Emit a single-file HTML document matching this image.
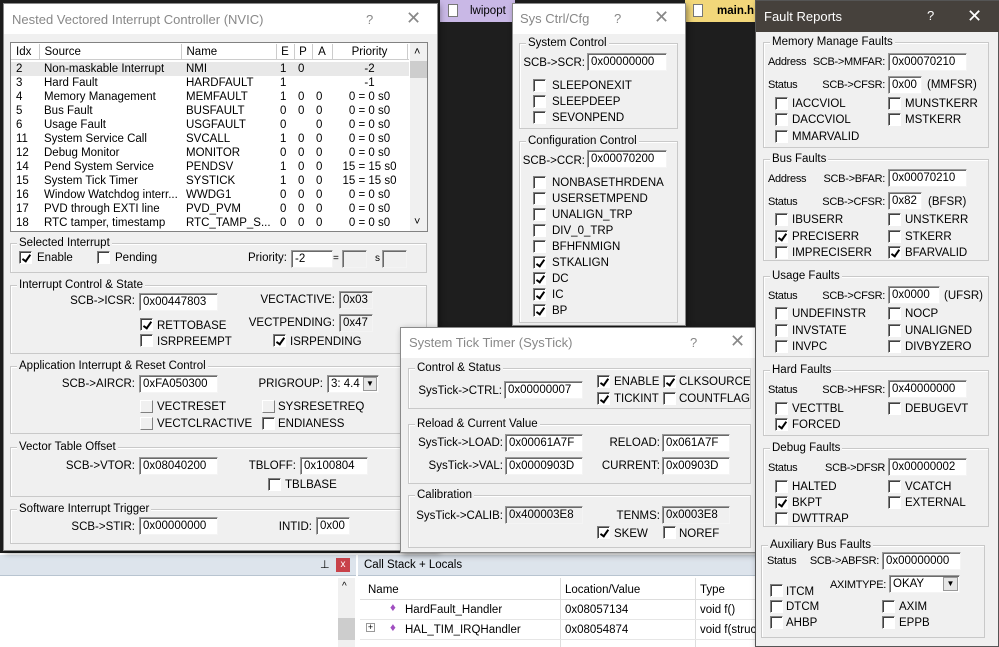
<!DOCTYPE html>
<html><head><meta charset="utf-8"><style>
*{margin:0;padding:0;box-sizing:border-box}
body{width:999px;height:647px;position:relative;overflow:hidden;background:#1e1e1e;font:11px "Liberation Sans",sans-serif}
div,span{position:absolute}
.w{background:#f0f0f0;border:1px solid #8a8a8a;box-shadow:2px 2px 6px rgba(0,0,0,.4)}
.tb{background:#fff}
.t{white-space:nowrap;line-height:14px;color:#000;font-size:11.5px}
.r{text-align:right}
.s{font-size:11px;letter-spacing:-0.3px}
.g{border:1px solid #c9c9c9;box-shadow:1px 1px 0 #fff inset}
.gl{background:#f0f0f0;padding:0 2px;top:-8px;left:6px;line-height:14px;white-space:nowrap;font-size:11.5px}
.i{background:#fff;border:1px solid;border-color:#9a9a9a #f4f4f4 #f4f4f4 #9a9a9a;box-shadow:inset 1px 1px 0 #6a6a6a;height:18px;line-height:16px;padding-left:3px;white-space:nowrap;overflow:hidden;font-size:11.5px}
.gr{background:#f0f0f0}
.c{width:13px;height:13px;background:#fff;border:1px solid;border-color:#808080 #fff #fff #808080;box-shadow:inset 1px 1px 0 #404040}
.k::after{content:"";position:absolute;left:4px;top:1px;width:3px;height:7px;border:solid #000;border-width:0 2px 2px 0;transform:rotate(35deg)}
.ti{color:#888;font-size:13px;line-height:16px;white-space:nowrap}
table{border-collapse:collapse;font-size:11.5px}
td{height:14px;line-height:14px;padding:0;white-space:nowrap}
</style></head><body>

<div style="left:440px;top:0;width:75px;height:22px;background:#c9b8e6"><span style="left:8px;top:4px;width:10px;height:13px;background:#fff;border:1px solid #777"></span><span class="t" style="left:30px;top:4px">lwipopt</span></div>
<div style="left:685px;top:0;width:72px;height:22px;background:#f2d77a"><span style="left:8px;top:4px;width:10px;height:13px;background:#fff;border:1px solid #777"></span><span class="t" style="left:32px;top:4px;font-weight:bold">main.h</span></div>

<div style="left:0;top:553px;width:999px;height:94px;background:#fff"></div>
<div style="left:0;top:555px;width:356px;height:21px;background:#dde4ec;border-bottom:1px solid #b8c4d0"><span class="t" style="left:320px;top:3px;font-size:11px">⊥</span><span style="left:336px;top:3px;width:14px;height:14px;background:#c8424a;color:#fff;font-size:10px;line-height:14px;text-align:center">x</span></div>
<div style="left:338px;top:578px;width:17px;height:69px;background:#f0f0f0"><span style="left:0;top:40px;width:17px;height:22px;background:#cdcdcd"></span><span class="t" style="left:4px;top:2px;font-size:10px">^</span></div>
<div style="left:358px;top:555px;width:400px;height:21px;background:#dde4ec;border-bottom:1px solid #b8c4d0"><span class="t" style="left:6px;top:3px">Call Stack + Locals</span></div>
<div style="left:360px;top:578px;width:398px;height:22px;background:#fff;border-bottom:1px solid #ddd"><span class="t" style="left:8px;top:5px">Name</span><span class="t" style="left:205px;top:5px">Location/Value</span><span class="t" style="left:340px;top:5px">Type</span></div>
<div style="left:560px;top:578px;width:1px;height:69px;background:#ddd"></div>
<div style="left:695px;top:578px;width:1px;height:69px;background:#ddd"></div>
<div style="left:360px;top:600px;width:398px;height:20px;border-bottom:1px solid #e6e6e6"><span class="t" style="left:30px;top:1px;color:#a04fc0">♦</span><span class="t" style="left:45px;top:3px">HardFault_Handler</span><span class="t" style="left:205px;top:3px">0x08057134</span><span class="t" style="left:340px;top:3px">void f()</span></div>
<div style="left:360px;top:620px;width:398px;height:20px;border-bottom:1px solid #e6e6e6"><span class="t" style="left:6px;top:3px;width:9px;height:9px;border:1px solid #999;font-size:9px;line-height:7px;text-align:center">+</span><span class="t" style="left:30px;top:1px;color:#a04fc0">♦</span><span class="t" style="left:45px;top:3px">HAL_TIM_IRQHandler</span><span class="t" style="left:205px;top:3px">0x08054874</span><span class="t" style="left:340px;top:3px">void f(struc</span></div>

<div class="w" style="left:3px;top:3px;width:435px;height:548px">
 <div class="tb" style="left:0;top:0;width:433px;height:30px"><span class="ti" style="left:8px;top:8px">Nested Vectored Interrupt Controller (NVIC)</span><span class="ti" style="left:362px;top:8px">?</span><span class="ti" style="left:402px;top:6px;font-size:18px">✕</span></div>
</div>
<div style="left:10px;top:42px;width:418px;height:190px;background:#fff;border:1px solid #828282">
 <div style="left:0;top:0;width:398px;height:17px;border-bottom:1px solid #ccc"></div>
 <table style="position:absolute;left:0;top:1px">
 <tr style="height:16px"><td style="width:28px;padding-left:5px;border-right:1px solid #ccc">Idx</td><td style="width:142px;padding-left:5px;border-right:1px solid #ccc">Source</td><td style="width:95px;padding-left:5px;border-right:1px solid #ccc">Name</td><td style="width:18px;text-align:center;border-right:1px solid #ccc">E</td><td style="width:18px;text-align:center;border-right:1px solid #ccc">P</td><td style="width:20px;text-align:center;border-right:1px solid #ccc">A</td><td style="width:75px;text-align:center;border-right:1px solid #ccc">Priority</td></tr>
 </table>
 <div style="left:0;top:19px;width:398px;height:14px;background:#e8e8e8"></div>
 <table style="position:absolute;left:0;top:19px">
 <tr><td style="width:28px;padding-left:5px">2</td><td style="width:142px;padding-left:5px">Non-maskable Interrupt</td><td style="width:95px;padding-left:5px">NMI</td><td style="width:18px;padding-left:4px">1</td><td style="width:18px;padding-left:4px">0</td><td style="width:20px;padding-left:4px"></td><td style="width:75px;text-align:center">-2</td></tr>
 <tr><td style="padding-left:5px">3</td><td style="padding-left:5px">Hard Fault</td><td style="padding-left:5px">HARDFAULT</td><td style="padding-left:4px">1</td><td></td><td></td><td style="text-align:center">-1</td></tr>
 <tr><td style="padding-left:5px">4</td><td style="padding-left:5px">Memory Management</td><td style="padding-left:5px">MEMFAULT</td><td style="padding-left:4px">1</td><td style="padding-left:4px">0</td><td style="padding-left:4px">0</td><td style="text-align:center">0 = 0 s0</td></tr>
 <tr><td style="padding-left:5px">5</td><td style="padding-left:5px">Bus Fault</td><td style="padding-left:5px">BUSFAULT</td><td style="padding-left:4px">0</td><td style="padding-left:4px">0</td><td style="padding-left:4px">0</td><td style="text-align:center">0 = 0 s0</td></tr>
 <tr><td style="padding-left:5px">6</td><td style="padding-left:5px">Usage Fault</td><td style="padding-left:5px">USGFAULT</td><td style="padding-left:4px">0</td><td></td><td style="padding-left:4px">0</td><td style="text-align:center">0 = 0 s0</td></tr>
 <tr><td style="padding-left:5px">11</td><td style="padding-left:5px">System Service Call</td><td style="padding-left:5px">SVCALL</td><td style="padding-left:4px">1</td><td style="padding-left:4px">0</td><td style="padding-left:4px">0</td><td style="text-align:center">0 = 0 s0</td></tr>
 <tr><td style="padding-left:5px">12</td><td style="padding-left:5px">Debug Monitor</td><td style="padding-left:5px">MONITOR</td><td style="padding-left:4px">0</td><td style="padding-left:4px">0</td><td style="padding-left:4px">0</td><td style="text-align:center">0 = 0 s0</td></tr>
 <tr><td style="padding-left:5px">14</td><td style="padding-left:5px">Pend System Service</td><td style="padding-left:5px">PENDSV</td><td style="padding-left:4px">1</td><td style="padding-left:4px">0</td><td style="padding-left:4px">0</td><td style="text-align:center">15 = 15 s0</td></tr>
 <tr><td style="padding-left:5px">15</td><td style="padding-left:5px">System Tick Timer</td><td style="padding-left:5px">SYSTICK</td><td style="padding-left:4px">1</td><td style="padding-left:4px">0</td><td style="padding-left:4px">0</td><td style="text-align:center">15 = 15 s0</td></tr>
 <tr><td style="padding-left:5px">16</td><td style="padding-left:5px">Window Watchdog interr...</td><td style="padding-left:5px">WWDG1</td><td style="padding-left:4px">0</td><td style="padding-left:4px">0</td><td style="padding-left:4px">0</td><td style="text-align:center">0 = 0 s0</td></tr>
 <tr><td style="padding-left:5px">17</td><td style="padding-left:5px">PVD through EXTI line</td><td style="padding-left:5px">PVD_PVM</td><td style="padding-left:4px">0</td><td style="padding-left:4px">0</td><td style="padding-left:4px">0</td><td style="text-align:center">0 = 0 s0</td></tr>
 <tr><td style="padding-left:5px">18</td><td style="padding-left:5px">RTC tamper, timestamp</td><td style="padding-left:5px">RTC_TAMP_S...</td><td style="padding-left:4px">0</td><td style="padding-left:4px">0</td><td style="padding-left:4px">0</td><td style="text-align:center">0 = 0 s0</td></tr>
 </table>
 <div style="left:399px;top:0;width:17px;height:188px;background:#f0f0f0"><span style="left:0;top:18px;width:17px;height:17px;background:#cdcdcd"></span><span class="t" style="left:4px;top:2px;font-size:11px">˄</span><span class="t" style="left:4px;top:172px;font-size:11px">˅</span></div>
</div>

<div class="g" style="left:10px;top:243px;width:417px;height:30px"><span class="gl">Selected Interrupt</span></div>
<span class="c k" style="left:19px;top:251px"></span><span class="t" style="left:37px;top:251px">Enable</span>
<span class="c" style="left:97px;top:251px"></span><span class="t" style="left:115px;top:251px">Pending</span>
<span class="t r" style="right:712px;top:251px">Priority:</span>
<span class="i" style="left:291px;top:250px;width:42px">-2</span><span class="t" style="left:333px;top:252px;font-size:10px">=</span>
<span class="i gr" style="left:342px;top:250px;width:25px"></span><span class="t" style="left:375px;top:252px;font-size:10px">s</span>
<span class="i gr" style="left:382px;top:250px;width:25px"></span>

<div class="g" style="left:10px;top:285px;width:417px;height:69px"><span class="gl">Interrupt Control &amp; State</span></div>
<span class="t r" style="right:864px;top:294px">SCB-&gt;ICSR:</span><span class="i" style="left:139px;top:293px;width:79px">0x00447803</span>
<span class="t r" style="right:664px;top:293px">VECTACTIVE:</span><span class="i gr" style="left:339px;top:291px;width:34px">0x03</span>
<span class="t r" style="right:664px;top:316px">VECTPENDING:</span><span class="i gr" style="left:339px;top:314px;width:34px">0x47</span>
<span class="c k" style="left:140px;top:318px"></span><span class="t" style="left:157px;top:319px">RETTOBASE</span>
<span class="c" style="left:140px;top:334px"></span><span class="t" style="left:157px;top:335px">ISRPREEMPT</span>
<span class="c k" style="left:273px;top:334px"></span><span class="t" style="left:290px;top:335px">ISRPENDING</span>

<div class="g" style="left:10px;top:366px;width:417px;height:68px"><span class="gl">Application Interrupt &amp; Reset Control</span></div>
<span class="t r" style="right:864px;top:377px">SCB-&gt;AIRCR:</span><span class="i" style="left:139px;top:375px;width:79px">0xFA050300</span>
<span class="t r" style="right:676px;top:377px">PRIGROUP:</span>
<span class="i" style="left:327px;top:375px;width:52px">3: 4.4<span style="right:1px;top:1px;width:14px;height:14px;background:#e6e6e6;border:1px solid #999;font-size:8px;text-align:center;line-height:12px">▼</span></span>
<span class="c" style="left:140px;top:400px;box-shadow:none;border-color:#fff #808080 #808080 #fff;background:#f0f0f0"></span><span class="t" style="left:157px;top:400px">VECTRESET</span>
<span class="c" style="left:140px;top:417px;box-shadow:none;border-color:#fff #808080 #808080 #fff;background:#f0f0f0"></span><span class="t" style="left:157px;top:417px">VECTCLRACTIVE</span>
<span class="c" style="left:262px;top:400px;box-shadow:none;border-color:#fff #808080 #808080 #fff;background:#f0f0f0"></span><span class="t" style="left:278px;top:400px">SYSRESETREQ</span>
<span class="c" style="left:262px;top:417px"></span><span class="t" style="left:278px;top:417px">ENDIANESS</span>

<div class="g" style="left:10px;top:447px;width:417px;height:50px"><span class="gl">Vector Table Offset</span></div>
<span class="t r" style="right:864px;top:459px">SCB-&gt;VTOR:</span><span class="i" style="left:139px;top:457px;width:79px">0x08040200</span>
<span class="t r" style="right:703px;top:459px">TBLOFF:</span><span class="i" style="left:300px;top:457px;width:68px">0x100804</span>
<span class="c" style="left:268px;top:478px"></span><span class="t" style="left:285px;top:478px">TBLBASE</span>

<div class="g" style="left:10px;top:509px;width:417px;height:35px"><span class="gl">Software Interrupt Trigger</span></div>
<span class="t r" style="right:864px;top:520px">SCB-&gt;STIR:</span><span class="i" style="left:139px;top:517px;width:79px">0x00000000</span>
<span class="t r" style="right:687px;top:520px">INTID:</span><span class="i" style="left:316px;top:517px;width:34px">0x00</span>

<div class="w" style="left:512px;top:3px;width:174px;height:323px">
 <div class="tb" style="left:0;top:0;width:172px;height:30px"><span class="ti" style="left:7px;top:7px">Sys Ctrl/Cfg</span><span class="ti" style="left:101px;top:7px">?</span><span class="ti" style="left:141px;top:5px;font-size:18px">✕</span></div>
 <div class="g" style="left:6px;top:39px;width:159px;height:86px"><span class="gl">System Control</span></div>
 <span class="t r" style="right:100px;top:52px">SCB-&gt;SCR:</span><span class="i" style="left:74px;top:49px;width:80px">0x00000000</span>
 <span class="c" style="left:20px;top:75px"></span><span class="t" style="left:39px;top:75px">SLEEPONEXIT</span>
 <span class="c" style="left:20px;top:91px"></span><span class="t" style="left:39px;top:91px">SLEEPDEEP</span>
 <span class="c" style="left:20px;top:107px"></span><span class="t" style="left:39px;top:107px">SEVONPEND</span>
 <div class="g" style="left:6px;top:137px;width:159px;height:182px"><span class="gl">Configuration Control</span></div>
 <span class="t r" style="right:100px;top:150px">SCB-&gt;CCR:</span><span class="i" style="left:74px;top:146px;width:80px">0x00070200</span>
 <span class="c" style="left:20px;top:172px"></span><span class="t" style="left:39px;top:172px">NONBASETHRDENA</span>
 <span class="c" style="left:20px;top:188px"></span><span class="t" style="left:39px;top:188px">USERSETMPEND</span>
 <span class="c" style="left:20px;top:204px"></span><span class="t" style="left:39px;top:204px">UNALIGN_TRP</span>
 <span class="c" style="left:20px;top:220px"></span><span class="t" style="left:39px;top:220px">DIV_0_TRP</span>
 <span class="c" style="left:20px;top:236px"></span><span class="t" style="left:39px;top:236px">BFHFNMIGN</span>
 <span class="c k" style="left:20px;top:252px"></span><span class="t" style="left:39px;top:252px">STKALIGN</span>
 <span class="c k" style="left:20px;top:268px"></span><span class="t" style="left:39px;top:268px">DC</span>
 <span class="c k" style="left:20px;top:284px"></span><span class="t" style="left:39px;top:284px">IC</span>
 <span class="c k" style="left:20px;top:300px"></span><span class="t" style="left:39px;top:300px">BP</span>
</div>

<div class="w" style="left:400px;top:327px;width:360px;height:226px">
 <div class="tb" style="left:0;top:0;width:358px;height:30px"><span class="ti" style="left:8px;top:7px">System Tick Timer (SysTick)</span><span class="ti" style="left:289px;top:7px">?</span><span class="ti" style="left:329px;top:5px;font-size:18px">✕</span></div>
 <div class="g" style="left:7px;top:40px;width:343px;height:41px"><span class="gl">Control &amp; Status</span></div>
 <span class="t r" style="right:257px;top:56px">SysTick-&gt;CTRL:</span><span class="i" style="left:103px;top:53px;width:79px">0x00000007</span>
 <span class="c k" style="left:196px;top:47px"></span><span class="t" style="left:213px;top:47px">ENABLE</span>
 <span class="c k" style="left:262px;top:47px"></span><span class="t" style="left:278px;top:47px">CLKSOURCE</span>
 <span class="c k" style="left:196px;top:64px"></span><span class="t" style="left:213px;top:64px">TICKINT</span>
 <span class="c" style="left:262px;top:64px"></span><span class="t" style="left:278px;top:64px">COUNTFLAG</span>
 <div class="g" style="left:7px;top:96px;width:343px;height:60px"><span class="gl">Reload &amp; Current Value</span></div>
 <span class="t r" style="right:256px;top:108px">SysTick-&gt;LOAD:</span><span class="i" style="left:104px;top:106px;width:78px">0x00061A7F</span>
 <span class="t r" style="right:256px;top:131px">SysTick-&gt;VAL:</span><span class="i" style="left:104px;top:129px;width:78px">0x0000903D</span>
 <span class="t r" style="right:99px;top:108px">RELOAD:</span><span class="i" style="left:261px;top:106px;width:68px">0x061A7F</span>
 <span class="t r" style="right:99px;top:131px">CURRENT:</span><span class="i" style="left:261px;top:129px;width:68px">0x00903D</span>
 <div class="g" style="left:7px;top:167px;width:343px;height:53px"><span class="gl">Calibration</span></div>
 <span class="t r" style="right:256px;top:181px">SysTick-&gt;CALIB:</span><span class="i gr" style="left:104px;top:178px;width:78px">0x400003E8</span>
 <span class="t r" style="right:99px;top:181px">TENMS:</span><span class="i gr" style="left:261px;top:178px;width:68px">0x0003E8</span>
 <span class="c k" style="left:196px;top:198px"></span><span class="t" style="left:213px;top:199px">SKEW</span>
 <span class="c" style="left:262px;top:198px"></span><span class="t" style="left:278px;top:199px">NOREF</span>
</div>

<div class="w" style="left:755px;top:0;width:244px;height:647px;border-color:#555">
 <div style="left:0;top:0;width:244px;height:31px;background:#46413c"><span class="t" style="left:8px;top:9px;color:#fff;font-size:13px">Fault Reports</span><span class="t" style="left:171px;top:8px;color:#fff;font-size:13px">?</span><span class="t" style="left:211px;top:5px;color:#fff;font-size:18px;line-height:20px">✕</span></div>
 <div class="g" style="left:7px;top:41px;width:226px;height:106px"><span class="gl">Memory Manage Faults</span></div>
 <span class="t s" style="left:12px;top:54px">Address</span><span class="t r s" style="right:113px;top:54px">SCB-&gt;MMFAR:</span><span class="i" style="left:132px;top:52px;width:79px">0x00070210</span>
 <span class="t s" style="left:12px;top:77px">Status</span><span class="t r s" style="right:113px;top:77px">SCB-&gt;CFSR:</span><span class="i" style="left:132px;top:75px;width:34px">0x00</span><span class="t" style="left:171px;top:77px">(MMFSR)</span>
 <span class="c" style="left:19px;top:96px"></span><span class="t" style="left:36px;top:96px">IACCVIOL</span><span class="c" style="left:132px;top:96px"></span><span class="t" style="left:149px;top:96px">MUNSTKERR</span>
 <span class="c" style="left:19px;top:112px"></span><span class="t" style="left:36px;top:112px">DACCVIOL</span><span class="c" style="left:132px;top:112px"></span><span class="t" style="left:149px;top:112px">MSTKERR</span>
 <span class="c" style="left:19px;top:129px"></span><span class="t" style="left:36px;top:129px">MMARVALID</span>

 <div class="g" style="left:7px;top:158px;width:226px;height:102px"><span class="gl">Bus Faults</span></div>
 <span class="t s" style="left:12px;top:171px">Address</span><span class="t r s" style="right:113px;top:171px">SCB-&gt;BFAR:</span><span class="i" style="left:132px;top:168px;width:79px">0x00070210</span>
 <span class="t s" style="left:12px;top:194px">Status</span><span class="t r s" style="right:113px;top:194px">SCB-&gt;CFSR:</span><span class="i" style="left:132px;top:191px;width:34px">0x82</span><span class="t" style="left:172px;top:194px">(BFSR)</span>
 <span class="c" style="left:19px;top:212px"></span><span class="t" style="left:36px;top:212px">IBUSERR</span><span class="c" style="left:132px;top:212px"></span><span class="t" style="left:149px;top:212px">UNSTKERR</span>
 <span class="c k" style="left:19px;top:229px"></span><span class="t" style="left:36px;top:229px">PRECISERR</span><span class="c" style="left:132px;top:229px"></span><span class="t" style="left:149px;top:229px">STKERR</span>
 <span class="c" style="left:19px;top:245px"></span><span class="t" style="left:36px;top:245px">IMPRECISERR</span><span class="c k" style="left:132px;top:245px"></span><span class="t" style="left:149px;top:245px">BFARVALID</span>

 <div class="g" style="left:7px;top:275px;width:226px;height:81px"><span class="gl">Usage Faults</span></div>
 <span class="t s" style="left:12px;top:288px">Status</span><span class="t r s" style="right:113px;top:288px">SCB-&gt;CFSR:</span><span class="i" style="left:132px;top:285px;width:52px">0x0000</span><span class="t" style="left:188px;top:288px">(UFSR)</span>
 <span class="c" style="left:19px;top:306px"></span><span class="t" style="left:36px;top:306px">UNDEFINSTR</span><span class="c" style="left:132px;top:306px"></span><span class="t" style="left:149px;top:306px">NOCP</span>
 <span class="c" style="left:19px;top:323px"></span><span class="t" style="left:36px;top:323px">INVSTATE</span><span class="c" style="left:132px;top:323px"></span><span class="t" style="left:149px;top:323px">UNALIGNED</span>
 <span class="c" style="left:19px;top:339px"></span><span class="t" style="left:36px;top:339px">INVPC</span><span class="c" style="left:132px;top:339px"></span><span class="t" style="left:149px;top:339px">DIVBYZERO</span>

 <div class="g" style="left:7px;top:369px;width:226px;height:66px"><span class="gl">Hard Faults</span></div>
 <span class="t s" style="left:12px;top:382px">Status</span><span class="t r s" style="right:113px;top:382px">SCB-&gt;HFSR:</span><span class="i" style="left:132px;top:379px;width:79px">0x40000000</span>
 <span class="c" style="left:19px;top:401px"></span><span class="t" style="left:36px;top:401px">VECTTBL</span><span class="c" style="left:132px;top:401px"></span><span class="t" style="left:149px;top:401px">DEBUGEVT</span>
 <span class="c k" style="left:19px;top:417px"></span><span class="t" style="left:36px;top:417px">FORCED</span>

 <div class="g" style="left:7px;top:447px;width:226px;height:79px"><span class="gl">Debug Faults</span></div>
 <span class="t s" style="left:12px;top:460px">Status</span><span class="t r s" style="right:113px;top:460px">SCB-&gt;DFSR</span><span class="i" style="left:132px;top:457px;width:79px">0x00000002</span>
 <span class="c" style="left:19px;top:479px"></span><span class="t" style="left:36px;top:479px">HALTED</span><span class="c" style="left:132px;top:479px"></span><span class="t" style="left:149px;top:479px">VCATCH</span>
 <span class="c k" style="left:19px;top:495px"></span><span class="t" style="left:36px;top:495px">BKPT</span><span class="c" style="left:132px;top:495px"></span><span class="t" style="left:149px;top:495px">EXTERNAL</span>
 <span class="c" style="left:19px;top:511px"></span><span class="t" style="left:36px;top:511px">DWTTRAP</span>

 <div class="g" style="left:5px;top:544px;width:224px;height:93px"><span class="gl">Auxiliary Bus Faults</span></div>
 <span class="t s" style="left:11px;top:553px">Status</span><span class="t r s" style="right:119px;top:553px">SCB-&gt;ABFSR:</span><span class="i" style="left:126px;top:551px;width:79px">0x00000000</span>
 <span class="t r s" style="right:112px;top:577px">AXIMTYPE:</span>
 <span class="i" style="left:133px;top:574px;width:71px">OKAY<span style="right:1px;top:1px;width:15px;height:14px;background:#e6e6e6;border:1px solid #999;font-size:8px;text-align:center;line-height:12px">▼</span></span>
 <span class="c" style="left:14px;top:583px"></span><span class="t" style="left:30px;top:584px">ITCM</span>
 <span class="c" style="left:14px;top:599px"></span><span class="t" style="left:30px;top:599px">DTCM</span>
 <span class="c" style="left:14px;top:615px"></span><span class="t" style="left:30px;top:615px">AHBP</span>
 <span class="c" style="left:126px;top:599px"></span><span class="t" style="left:143px;top:599px">AXIM</span>
 <span class="c" style="left:126px;top:615px"></span><span class="t" style="left:143px;top:615px">EPPB</span>
</div>
</body></html>
